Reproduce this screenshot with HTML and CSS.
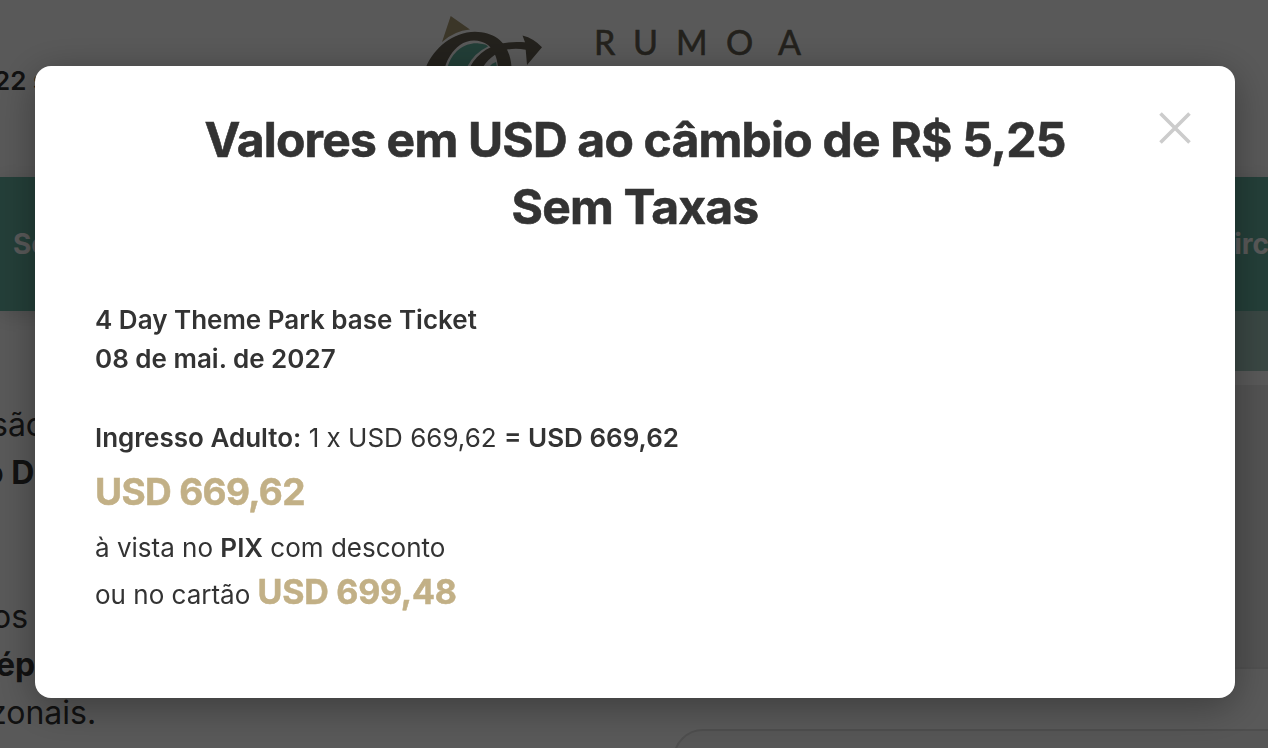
FILE: index.html
```html
<!DOCTYPE html>
<html lang="pt-BR">
<head>
    <meta charset="UTF-8">
    <title>Rumo a</title>
    <link rel="stylesheet" href="styles.css">
</head>
<body>
    <header>
        <div class="phone">22 s</div>
        <svg class="logo" width="440" height="80" viewBox="0 0 440 80">
            <path d="M50.7 16L70 29.5Q54 31 42 42Z" fill="#a99a73"/>
            <path d="M26 67C34 48 53 32 75 31.8C96 32 110 44 111.5 67H98C97 57 94 50 88 45C80 39 68 39 60 45C52 51 48 58 45 67Z" fill="#655f52"/>
            <path d="M70 67C80 49 98 40 125 42.3L122.5 35.5Q134 38.5 142 47.3L127 65L125.7 49.7C108 46 93 52 83 67Z" fill="#655f52"/>
            <path d="M47.7 67C52 51 66 42 79 43.5Q87 44 88 46.5Q74 53 67 67Z" fill="#62b29e"/>
            <path d="M89 67Q92 63 96 62L97 67Z" fill="#62b29e"/>
            <text class="brand" y="55" x="194 233 276 326 378">RUMOA</text>
        </svg>
    </header>

    <nav>
        <a class="navlink">Seguro</a>
        <a class="navlink last">Circ</a>
    </nav>

    <main>
        <div class="article">
            <p class="line s1">são</p>
            <p class="line s2"><b>o D</b></p>
            <p class="line">&nbsp;</p>
            <p class="line">&nbsp;</p>
            <p class="line s3">os</p>
            <p class="line s4"><b>épo</b></p>
            <p class="line s5">zonais.</p>
        </div>
        <aside>
            <div class="band"></div>
            <div class="panel"></div>
            <div class="field"></div>
        </aside>
    </main>

    <div class="overlay">
        <div class="modal">
            <button class="close" aria-label="Fechar">
                <svg width="32" height="32" viewBox="0 0 32 32">
                    <path d="M1.5 1.5L30.5 30.5M30.5 1.5L1.5 30.5" stroke="#ccc" stroke-width="3.6"/>
                </svg>
            </button>
            <h2>Valores em USD ao câmbio de R$ 5,25<br>Sem Taxas</h2>
            <div class="ticket">
                <strong>4 Day Theme Park base Ticket</strong><br>
                <strong>08 de mai. de 2027</strong>
            </div>
            <div class="item"><strong>Ingresso Adulto:</strong> 1 x USD 669,62 <strong>= USD 669,62</strong></div>
            <div class="total">USD 669,62</div>
            <div class="pix">à vista no <strong>PIX</strong> com desconto</div>
            <div class="card">ou no cartão <span class="price">USD 699,48</span></div>
        </div>
    </div>
</body>
</html>
```
FILE: styles.css
```css
* {
    box-sizing: border-box;
}
body {
    margin: 0;
    height: 748px;
    overflow: hidden;
    background-color: #fff;
    color: #333;
    font-family: Inter, sans-serif;
    display: flex;
    flex-direction: column;
}
header {
    height: 177px;
    flex: none;
    display: flex;
}
.phone {
    width: 400px;
    margin-top: 64px;
    text-indent: -6px;
    font-size: 26px;
    font-weight: 600;
    line-height: 34px;
}
.brand {
    font-family: Lato, sans-serif;
    font-size: 34px;
    fill: #655f52;
    stroke: #655f52;
    stroke-width: 0.6px;
}
nav {
    height: 134px;
    flex: none;
    display: flex;
    justify-content: space-between;
    align-items: center;
    padding-left: 13px;
    background-color: #67b4a2;
    box-shadow: 0 4px 20px rgba(0, 0, 0, 0.15);
    overflow: hidden;
}
.navlink {
    color: #fff;
    font-size: 28px;
    font-weight: 700;
}
.last {
    margin-right: -1px;
}
main {
    flex: 1;
    min-height: 0;
    display: flex;
    overflow: hidden;
}
.article {
    width: 664px;
    padding-top: 90px;
    font-size: 32px;
    line-height: 48px;
}
.line {
    margin: 0;
}
.s1 {
    text-indent: -9px;
}
.s2 {
    text-indent: -16px;
}
.s3 {
    text-indent: -8px;
}
.s4 {
    text-indent: -4px;
}
.s5 {
    text-indent: -11px;
}
aside {
    flex: 1;
}
.band {
    height: 60px;
    background: #a6ccc2;
}
.panel {
    height: 284px;
    margin-top: 14px;
    background: #ededed;
    border-bottom: 2px solid #e6e6e6;
}
.field {
    height: 60px;
    margin: 60px -60px 0 9px;
    background: #f7f7f7;
    border: 2px solid #dedede;
    border-radius: 30px;
}
.overlay {
    position: fixed;
    inset: 0;
    display: flex;
    background: rgba(0, 0, 0, 0.65);
}
.modal {
    position: relative;
    width: 1200px;
    height: 632px;
    margin: 66px 0 0 35px;
    padding: 40px 60px;
    background: #fff;
    border-radius: 16px;
    box-shadow: 0 8px 40px rgba(0, 0, 0, 0.35);
    font-size: 26px;
    line-height: 39px;
}
.close {
    position: absolute;
    top: 46px;
    right: 44px;
    padding: 0;
    border: none;
    background: none;
    line-height: 0;
    cursor: pointer;
}
h2 {
    margin: 0 0 60px;
    text-align: center;
    font-size: 48px;
    font-weight: 700;
    line-height: 67px;
    letter-spacing: -0.8px;
    -webkit-text-stroke: 0.6px #333;
}
strong {
    font-weight: 600;
}
.item {
    margin-top: 40px;
}
.total {
    margin-top: 8px;
    color: #c2b086;
    font-size: 37px;
    font-weight: 700;
    line-height: 53px;
    letter-spacing: -0.65px;
    -webkit-text-stroke: 0.5px #c2b086;
}
.pix {
    margin-top: 10px;
}
.card {
    line-height: 49px;
}
.price {
    color: #c2b086;
    font-size: 34px;
    font-weight: 700;
    letter-spacing: -0.25px;
    -webkit-text-stroke: 0.5px #c2b086;
}
```
